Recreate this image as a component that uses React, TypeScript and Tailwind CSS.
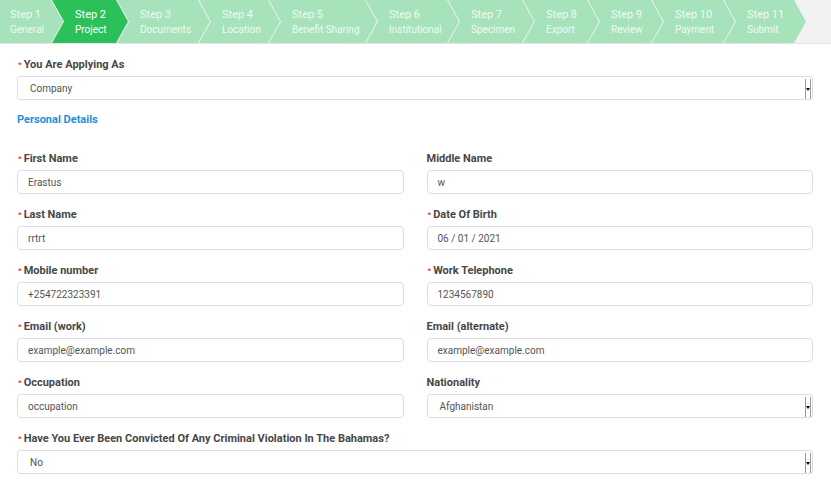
import React from 'react';

const steps = [
  { n: 'Step 1', label: 'General', w: 63 },
  { n: 'Step 2', label: 'Project', w: 76, active: true },
  { n: 'Step 3', label: 'Documents', w: 93 },
  { n: 'Step 4', label: 'Location', w: 81 },
  { n: 'Step 5', label: 'Benefit Sharing', w: 108 },
  { n: 'Step 6', label: 'Institutional', w: 93 },
  { n: 'Step 7', label: 'Specimen', w: 86 },
  { n: 'Step 8', label: 'Export', w: 76 },
  { n: 'Step 9', label: 'Review', w: 75 },
  { n: 'Step 10', label: 'Payment', w: 83 },
  { n: 'Step 11', label: 'Submit', w: 82 },
];

const firstClip = 'polygon(0 0, calc(100% - 12px) 0, 100% 50%, calc(100% - 12px) 100%, 0 100%)';
const chevronClip = 'polygon(0 0, calc(100% - 12px) 0, 100% 50%, calc(100% - 12px) 100%, 0 100%, 12px 50%)';

function Label({ text, required }: { text: string; required?: boolean }) {
  return (
    <div className="flex items-center h-[14px] text-[11px] leading-[14px] font-bold text-[#474747]">
      {required && <span className="text-[#e8364a] text-[8px] leading-none mr-[2px] ml-[1px] -mt-[1px]">*</span>}
      {text}
    </div>
  );
}

function TextBox({ value }: { value: string }) {
  return (
    <div className="mt-[4px] h-[24px] rounded-[4px] border border-[#dedede] bg-white px-[10px] flex items-center text-[10px] text-[#555]">
      {value}
    </div>
  );
}

function SelectBox({ value }: { value: string }) {
  return (
    <div className="relative mt-[4px] h-[24px] rounded-[3px] border border-[#dedede] bg-white pl-[12px] flex items-center text-[10px] text-[#555]">
      {value}
      <div className="absolute right-[1px] top-[2px] bottom-[0px] w-[6px] border-l border-r border-[#9a9a9a] bg-white flex items-center justify-center">
        <div className="w-0 h-0 border-l-[2px] border-r-[2px] border-t-[3px] border-l-transparent border-r-transparent border-t-black" />
      </div>
    </div>
  );
}

function Field({ label, value, required, select }: { label: string; value: string; required?: boolean; select?: boolean }) {
  return (
    <div>
      <Label text={label} required={required} />
      {select ? <SelectBox value={value} /> : <TextBox value={value} />}
    </div>
  );
}

export default function App() {
  return (
    <div className="w-[831px] h-[486px] bg-white overflow-hidden" style={{ fontFamily: 'Roboto, "Liberation Sans", sans-serif' }}>
      <div className="flex h-[43px] bg-[#f2f2f2]">
        {steps.map((s, i) => (
          <div
            key={s.n}
            className={`shrink-0 h-[43px] pt-[8px] ${i === 0 ? 'pl-[10px]' : 'pl-[23px] -ml-[11px]'} ${s.active ? 'bg-[#2ac15b] text-white' : 'bg-[#a6e3bb] text-[#eefaf1]'}`}
            style={{ width: s.w, clipPath: i === 0 ? firstClip : chevronClip }}
          >
            <div className="text-[11px] leading-[13px] whitespace-nowrap">{s.n}</div>
            <div className="text-[10px] leading-[12px] mt-[3px] whitespace-nowrap">{s.label}</div>
          </div>
        ))}
      </div>
      <div className="h-px bg-[#e6e6e6]" />

      <div className="pl-[17px] pr-[18px] pt-[14px]">
        <Field label="You Are Applying As" value="Company" required select />

        <div className="mt-[13px] text-[11px] leading-[14px] font-bold text-[#1d90d8]">Personal Details</div>

        <div className="mt-[25px] grid grid-cols-2 gap-x-[23px] gap-y-[14px]">
          <Field label="First Name" value="Erastus" required />
          <Field label="Middle Name" value="w" />
          <Field label="Last Name" value="rrtrt" required />
          <Field label="Date Of Birth" value="06 / 01 / 2021" required />
          <Field label="Mobile number" value="+254722323391" required />
          <Field label="Work Telephone" value="1234567890" required />
          <Field label="Email (work)" value="example@example.com" required />
          <Field label="Email (alternate)" value="example@example.com" />
          <Field label="Occupation" value="occupation" required />
          <Field label="Nationality" value="Afghanistan" select />
        </div>

        <div className="mt-[14px]">
          <Field label="Have You Ever Been Convicted Of Any Criminal Violation In The Bahamas?" value="No" required select />
        </div>
      </div>
    </div>
  );
}
